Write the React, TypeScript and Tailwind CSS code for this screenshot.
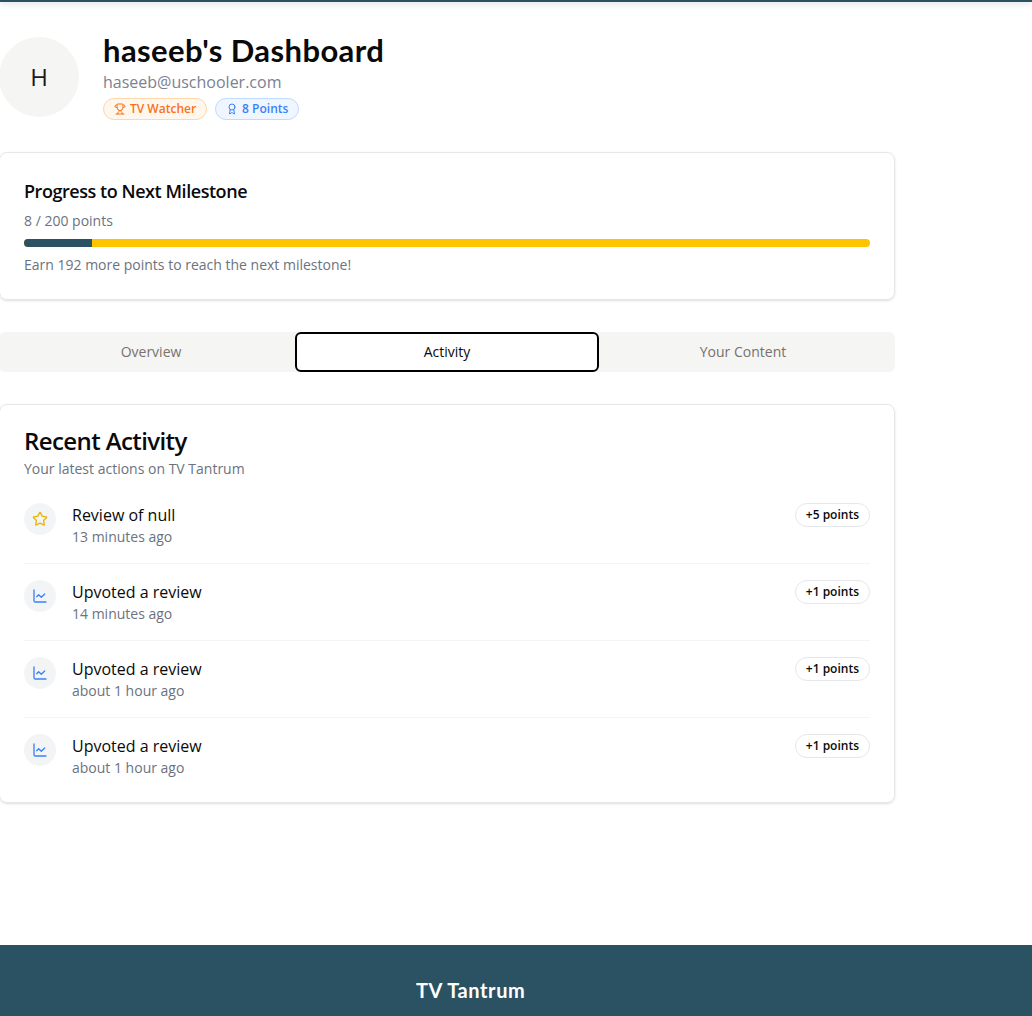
import { Award, ChartLine, Star, Trophy } from "lucide-react";

// recent activity rows
const activity = [
  { title: "Review of null", time: "13 minutes ago", points: "+5 points", kind: "star" },
  { title: "Upvoted a review", time: "14 minutes ago", points: "+1 points", kind: "chart" },
  { title: "Upvoted a review", time: "about 1 hour ago", points: "+1 points", kind: "chart" },
  { title: "Upvoted a review", time: "about 1 hour ago", points: "+1 points", kind: "chart" },
];

const App = () => {
  return (
    <div className="h-[1016px] overflow-hidden flex flex-col bg-white font-['Open_Sans',sans-serif] text-[#0a0a0a]">
      {/* top bar */}
      <div className="h-[2px] shrink-0 bg-[#2a5262] shadow-[0_1px_6px_rgba(0,0,0,0.25)]" />

      <main className="w-[896px] h-[943px] shrink-0 -ml-px">
        {/* profile header */}
        <div className="flex gap-6 pt-[35px] h-[150px]">
          <div className="w-[80px] h-[80px] rounded-full bg-[#f5f5f4] flex items-center justify-center text-2xl text-[#1c1917]">
            H
          </div>
          <div>
            <h1 className="font-['Lato',sans-serif] font-bold text-[31px] leading-[28px] tracking-[0.4px] -mt-px">
              haseeb's Dashboard
            </h1>
            <p className="text-base leading-6 text-[#7b8190] mt-[6px]">haseeb@uschooler.com</p>
            <div className="flex gap-2 mt-[4px]">
              <span className="h-[22px] flex items-center gap-1 px-[10px] rounded-full border border-[#fed7aa] bg-[#fff7ed] text-[#f97316] text-xs font-semibold">
                <Trophy size={12} />
                TV Watcher
              </span>
              <span className="h-[22px] flex items-center gap-1 px-[10px] rounded-full border border-[#bfdbfe] bg-[#eff6ff] text-[#3b82f6] text-xs font-semibold">
                <Award size={12} />
                8 Points
              </span>
            </div>
          </div>
        </div>

        {/* milestone card */}
        <section className="h-[148px] rounded-lg border border-[#e5e7eb] shadow-sm p-6 pt-[24px]">
          <h2 className="text-lg leading-7 font-semibold tracking-tight">Progress to Next Milestone</h2>
          <p className="text-sm leading-5 text-[#6b7280] mt-[6px]">8 / 200 points</p>
          <div className="h-2 mt-[8px] rounded-full bg-[#ffc400] overflow-hidden">
            <div className="h-full w-[8%] bg-[#2a5262]" />
          </div>
          <p className="text-sm leading-5 text-[#6b7280] mt-[8px]">
            Earn 192 more points to reach the next milestone!
          </p>
        </section>

        {/* tabs */}
        <div className="mt-8 h-10 px-1 rounded-md bg-[#f5f5f4] grid grid-cols-3 text-sm text-[#78716c]">
          <div className="flex items-center justify-center">Overview</div>
          <div className="-mx-1 flex items-center justify-center bg-white text-[#0a0a0a] rounded-md border-2 border-black">
            Activity
          </div>
          <div className="flex items-center justify-center">Your Content</div>
        </div>

        {/* recent activity */}
        <section className="mt-8 h-[399px] rounded-lg border border-[#e5e7eb] shadow-sm px-6 pt-[20px]">
          <h2 className="text-2xl leading-8 font-semibold tracking-tight">Recent Activity</h2>
          <p className="text-sm leading-5 text-[#6b7280] mt-[2px]">Your latest actions on TV Tantrum</p>
          <div className="mt-[24px] flex flex-col gap-4">
            {activity.map((item, i) => (
              <div
                key={i}
                className={`flex justify-between ${i < 3 ? "h-[61px] border-b border-[#f3f4f6]" : ""}`}
              >
                <div className="flex gap-4">
                  <div className="w-8 h-8 rounded-full bg-[#f3f4f6] flex items-center justify-center">
                    {item.kind === "star" ? (
                      <Star size={16} className="text-[#eab308]" />
                    ) : (
                      <ChartLine size={16} className="text-[#3b82f6]" />
                    )}
                  </div>
                  <div>
                    <p className="text-base leading-6">{item.title}</p>
                    <p className="text-sm leading-5 text-[#6b7280]">{item.time}</p>
                  </div>
                </div>
                <span className="h-6 flex items-center px-[10px] rounded-full border border-[#e5e7eb] text-xs font-semibold">
                  {item.points}
                </span>
              </div>
            ))}
          </div>
        </section>
      </main>

      {/* footer */}
      <footer className="flex-1 bg-[#2a5262] pt-[31px] pl-[416px]">
        <span className="font-['Lato',sans-serif] font-bold text-xl leading-7 tracking-[0.6px] text-white">TV Tantrum</span>
      </footer>
    </div>
  );
};

export default App;
